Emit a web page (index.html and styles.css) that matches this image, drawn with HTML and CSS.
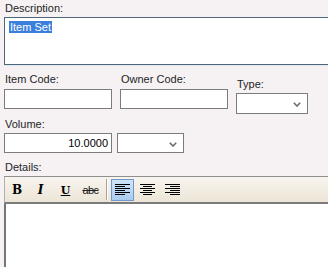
FILE: index.html
```html
<!DOCTYPE html>
<html>
<head>
<meta charset="utf-8">
<link rel="stylesheet" href="styles.css">
</head>
<body>
<div class="form">
  <div class="lbl">Description:</div>
  <div class="desc"><span class="sel">Item Set</span></div>

  <div class="row r1">
    <div class="field">
      <div class="lbl">Item Code:</div>
      <div class="input w108"></div>
    </div>
    <div class="field">
      <div class="lbl">Owner Code:</div>
      <div class="input w108"></div>
    </div>
    <div class="field type">
      <div class="lbl">Type:</div>
      <div class="select w72"><svg class="chev" width="8" height="5" viewBox="0 0 8 5"><polyline points="0.8,0.8 4,4 7.2,0.8" fill="none" stroke="#6a6a6a" stroke-width="1.6"/></svg></div>
    </div>
  </div>

  <div class="lbl vol-lbl">Volume:</div>
  <div class="row r2">
    <div class="input w108 num">10.0000</div>
    <div class="select w67"><svg class="chev" width="8" height="5" viewBox="0 0 8 5"><polyline points="0.8,0.8 4,4 7.2,0.8" fill="none" stroke="#6a6a6a" stroke-width="1.6"/></svg></div>
  </div>

  <div class="lbl det-lbl">Details:</div>
  <div class="toolbar">
    <div class="btn b-bold first">B</div>
    <div class="btn b-ital">I</div>
    <div class="btn b-und">U</div>
    <div class="btn b-strike">abc</div>
    <div class="sep"></div>
    <div class="btn active">
      <svg width="15" height="12" viewBox="0 0 15 12"><g fill="#000"><rect x="0" y="0" width="15" height="1"/><rect x="0" y="2" width="10" height="1"/><rect x="0" y="4" width="15" height="1"/><rect x="0" y="6" width="10" height="1"/><rect x="0" y="8" width="15" height="1"/><rect x="0" y="10" width="10" height="1"/></g></svg>
    </div>
    <div class="btn">
      <svg width="15" height="12" viewBox="0 0 15 12"><g fill="#000"><rect x="0" y="0" width="15" height="1"/><rect x="3" y="2" width="9" height="1"/><rect x="0" y="4" width="15" height="1"/><rect x="3" y="6" width="9" height="1"/><rect x="0" y="8" width="15" height="1"/><rect x="3" y="10" width="9" height="1"/></g></svg>
    </div>
    <div class="btn">
      <svg width="15" height="12" viewBox="0 0 15 12"><g fill="#000"><rect x="0" y="0" width="15" height="1"/><rect x="5" y="2" width="10" height="1"/><rect x="0" y="4" width="15" height="1"/><rect x="5" y="6" width="10" height="1"/><rect x="0" y="8" width="15" height="1"/><rect x="5" y="10" width="10" height="1"/></g></svg>
    </div>
  </div>
  <div class="editor"></div>
</div>
</body>
</html>
```

FILE: styles.css
```css
html, body {
  margin: 0;
  padding: 0;
  width: 328px;
  height: 267px;
  overflow: hidden;
  background: #f6f2f4;
}

.form {
  padding: 2px 0 0 4px;
  font-family: "Liberation Sans", Arial, sans-serif;
  font-size: 11px;
  color: #1e1e1e;
  width: 324px;
}

.lbl {
  line-height: 13px;
  height: 13px;
  padding-left: 1px;
  white-space: nowrap;
}

.desc {
  margin-top: 2px;
  height: 48px;
  width: 324px;
  box-sizing: border-box;
  border: 1px solid #4f6578;
  border-right: none;
  background: #fff;
  padding: 3px 0 0 4px;
  line-height: 13px;
  box-shadow: 0 1px 0 #dfe9f2;
}

.sel {
  background: #3b7fdc;
  color: #fff;
  padding: 0 1px;
  display: inline-block;
  line-height: 12px;
}

.row {
  display: flex;
}

.r1 {
  margin-top: 8px;
  gap: 8px;
  align-items: flex-start;
}

.field {
  display: flex;
  flex-direction: column;
}

.field .input {
  margin-top: 3px;
}

.type {
  margin-top: 5px;
}

.type .select {
  margin-top: 2px;
}

.input, .select {
  box-sizing: border-box;
  height: 20px;
  border: 1px solid #7c7c7c;
  background: #fff;
}

.select {
  height: 21px;
  position: relative;
}

.chev {
  position: absolute;
  right: 6px;
  top: 8px;
}

.w108 { width: 108px; }
.w72 { width: 72px; }
.w67 { width: 67px; }

.vol-lbl {
  margin-top: 4px;
}

.r2 {
  margin-top: 2px;
  gap: 5px;
}

.r2 .select {
  height: 20px;
}

.r2 .chev {
  top: 8px;
}

.num {
  text-align: right;
  padding-right: 3px;
  line-height: 18px;
  color: #000;
}

.det-lbl {
  margin-top: 8px;
}

.toolbar {
  margin-top: 2px;
  width: 324px;
  box-sizing: border-box;
  height: 28px;
  border-top: 1px solid #8f8f8f;
  border-left: 1px solid #b5b0a8;
  border-bottom: 2px solid #7b7b7b;
  background: linear-gradient(#f8f4ee, #ece5d7);
  display: flex;
  align-items: flex-start;
  padding: 2px 0 0 2px;
  gap: 2px;
}

.btn {
  box-sizing: border-box;
  width: 23px;
  height: 22px;
  display: flex;
  align-items: center;
  justify-content: center;
  font-size: 12px;
  color: #000;
  border: 1px solid transparent;
}

.btn.first {
  width: 20px;
}

.b-bold {
  font-family: "DejaVu Serif", "Liberation Serif", serif;
  font-weight: bold;
  font-size: 12px;
}

.b-ital {
  font-family: "DejaVu Serif", "Liberation Serif", serif;
  font-weight: bold;
  font-style: italic;
  font-size: 12px;
}

.b-und {
  font-family: "DejaVu Serif", "Liberation Serif", serif;
  font-weight: bold;
  text-decoration: underline;
  font-size: 11px;
}

.b-strike {
  font-family: "Liberation Sans", Arial, sans-serif;
  font-size: 11px;
  letter-spacing: -0.5px;
  text-decoration: line-through;
  color: #222;
}

.sep {
  width: 1px;
  height: 21px;
  background: #a9a49a;
  border-right: 1px solid #fffdf8;
  margin: 0 1px 0 2px;
}

.btn.active {
  background: linear-gradient(#cfe3f8, #acccef);
  border: 1px solid #7198cc;
}

.editor {
  width: 324px;
  box-sizing: border-box;
  height: 63px;
  background: #fff;
  border-left: 2px solid #767676;
}
```
